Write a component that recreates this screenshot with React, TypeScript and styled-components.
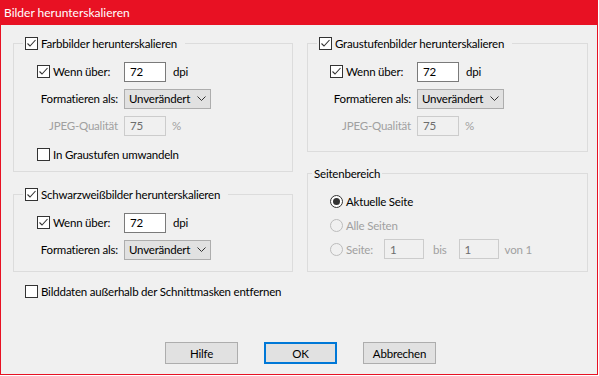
import React from 'react'
import styled, { createGlobalStyle } from 'styled-components'

/**
 * global
 */
const GlobalStyle = createGlobalStyle`
  html, body {
    margin: 0;
    padding: 0;
    background: #ffffff;
  }
  body {
    font-family: Lato, "Liberation Sans", sans-serif;
    font-size: 11.5px;
    letter-spacing: -0.2px;
    color: #000000;
  }
  * {
    box-sizing: border-box;
  }
`

/**
 * styled
 */
const Window = styled.div`
  width: 598px;
  height: 375px;
  display: flex;
  flex-direction: column;
  background: #f0f0f0;
  border: 1px solid #e81123;
  border-top: none;
`

const TitleBar = styled.div`
  height: 25px;
  flex-shrink: 0;
  display: flex;
  align-items: center;
  padding-left: 4px;
  margin: 0 -1px;
  background: #e81123;
  color: #ffffff;
  font-size: 12px;
  letter-spacing: 0;
`

const Body = styled.div`
  flex: 1;
  display: flex;
  flex-direction: column;
  padding: 11px 9px 10px 12px;
`

const Columns = styled.div`
  display: grid;
  grid-template-columns: 280px 281px;
  column-gap: 14px;
  align-items: start;
`

const Column = styled.div`
  display: flex;
  flex-direction: column;
`

const Group = styled.fieldset<{ $mt?: number }>`
  margin: ${(p) => p.$mt || 0}px 0 0 0;
  padding: 0;
  min-width: 0;
  border: 1px solid #dcdcdc;
`

const Legend = styled.legend<{ $ml: number; $pr: number }>`
  height: 15px;
  display: flex;
  align-items: center;
  margin-left: ${(p) => p.$ml}px;
  padding: 0 ${(p) => p.$pr}px 0 2px;
`

const Rows = styled.div<{ $indent: number; $pb: number; $gap: number }>`
  display: flex;
  flex-direction: column;
  gap: ${(p) => p.$gap}px;
  padding: 10px 0 ${(p) => p.$pb}px ${(p) => p.$indent}px;
`

const FieldRow = styled.div<{ $mt?: number; $h?: number }>`
  display: grid;
  grid-template-columns: 87px auto auto auto auto;
  justify-content: start;
  align-items: center;
  height: ${(p) => p.$h || 21}px;
  margin-top: ${(p) => p.$mt || 0}px;
`

const FieldLabel = styled.span<{ $disabled?: boolean }>`
  justify-self: end;
  padding-right: 6px;
  white-space: nowrap;
  color: ${(p) => (p.$disabled ? '#a0a0a0' : '#000000')};
`

const Unit = styled.span<{ $disabled?: boolean; $ml: number }>`
  margin-left: ${(p) => p.$ml}px;
  color: ${(p) => (p.$disabled ? '#a0a0a0' : '#000000')};
`

const CheckLabel = styled.label<{ $disabled?: boolean }>`
  display: flex;
  align-items: center;
  gap: 3px;
  white-space: nowrap;
  color: ${(p) => (p.$disabled ? '#a0a0a0' : '#000000')};
`

const Box = styled.span`
  width: 13px;
  height: 13px;
  flex-shrink: 0;
  display: inline-flex;
  border: 1px solid #333333;
  background: #ffffff;
`

const RadioDot = styled.span<{ $disabled?: boolean; $checked?: boolean }>`
  width: 13px;
  height: 13px;
  flex-shrink: 0;
  display: inline-flex;
  align-items: center;
  justify-content: center;
  border-radius: 50%;
  border: 1px solid ${(p) => (p.$disabled ? '#bcbcbc' : '#333333')};
  background: ${(p) => (p.$disabled ? '#f0f0f0' : '#ffffff')};
  &::after {
    content: '';
    display: ${(p) => (p.$checked ? 'block' : 'none')};
    width: 7px;
    height: 7px;
    border-radius: 50%;
    background: #333333;
  }
`

const TextBox = styled.span<{ $disabled?: boolean; $w?: number }>`
  width: ${(p) => p.$w || 42}px;
  height: 20px;
  display: flex;
  align-items: center;
  padding-left: 5px;
  border: 1px solid ${(p) => (p.$disabled ? '#cccccc' : '#7a7a7a')};
  background: ${(p) => (p.$disabled ? '#f0f0f0' : '#ffffff')};
  color: ${(p) => (p.$disabled ? '#6d6d6d' : '#000000')};
`

const Select = styled.span`
  width: 87px;
  height: 20px;
  display: flex;
  align-items: center;
  justify-content: space-between;
  padding: 0 4px 0 4px;
  border: 1px solid #adadad;
  background: #e1e1e1;
`

const PageRow = styled.div`
  display: flex;
  align-items: center;
  height: 20px;
`

const PageLead = styled.div`
  width: 54px;
  display: flex;
`

const OuterCheck = styled.div`
  height: 21px;
  display: flex;
  align-items: center;
  margin: 9px 0 0 12px;
`

const Footer = styled.div`
  margin-top: auto;
  display: flex;
  justify-content: center;
  gap: 26px;
`

const Button = styled.button<{ $default?: boolean }>`
  width: 73px;
  height: 22px;
  padding: 0;
  font: inherit;
  letter-spacing: inherit;
  color: #000000;
  background: #e1e1e1;
  border: ${(p) => (p.$default ? '2px solid #0078d7' : '1px solid #adadad')};
`

/**
 * parts
 */
const Check: React.FC<{ checked?: boolean; label: string }> = ({ checked, label }) => (
  <CheckLabel>
    <Box>
      {checked ? (
        <svg width="11" height="11" viewBox="0 0 11 11">
          <polyline points="1.5,5.5 4,8 9.5,2" fill="none" stroke="#333333" strokeWidth="1.1" />
        </svg>
      ) : null}
    </Box>
    {label}
  </CheckLabel>
)

const Radio: React.FC<{ checked?: boolean; disabled?: boolean; label: string }> = ({
  checked,
  disabled,
  label,
}) => (
  <CheckLabel $disabled={disabled}>
    <RadioDot $checked={checked} $disabled={disabled} />
    {label}
  </CheckLabel>
)

const Dropdown: React.FC<{ value: string }> = ({ value }) => (
  <Select>
    {value}
    <svg width="9" height="5" viewBox="0 0 9 5">
      <polyline points="0.5,0.5 4.5,4.5 8.5,0.5" fill="none" stroke="#333333" strokeWidth="1" />
    </svg>
  </Select>
)

const ResampleGroup: React.FC<{
  title: string
  indent: number
  mt?: number
  jpeg?: boolean
  grayscale?: boolean
  pb: number
}> = ({ title, indent, mt, jpeg, grayscale, pb }) => (
  <Group $mt={mt}>
    <Legend $ml={9} $pr={8}>
      <Check checked label={title} />
    </Legend>
    <Rows $indent={indent} $pb={pb} $gap={6}>
      <FieldRow>
        <Check checked label="Wenn über:" />
        <TextBox>72</TextBox>
        <Unit $ml={7}>dpi</Unit>
      </FieldRow>
      <FieldRow>
        <FieldLabel>Formatieren als:</FieldLabel>
        <Dropdown value="Unverändert" />
      </FieldRow>
      {jpeg ? (
        <FieldRow>
          <FieldLabel $disabled>JPEG-Qualität</FieldLabel>
          <TextBox $disabled>75</TextBox>
          <Unit $disabled $ml={6}>
            %
          </Unit>
        </FieldRow>
      ) : null}
      {grayscale ? (
        <FieldRow $mt={2}>
          <Check label="In Graustufen umwandeln" />
        </FieldRow>
      ) : null}
    </Rows>
  </Group>
)

const App: React.FC = () => {
  return (
    <>
      <GlobalStyle />
      <Window>
        <TitleBar>Bilder herunterskalieren</TitleBar>
        <Body>
          <Columns>
            <Column>
              <ResampleGroup title="Farbbilder herunterskalieren" indent={23} jpeg grayscale pb={6} />
              <ResampleGroup title="Schwarzweißbilder herunterskalieren" indent={23} mt={15} pb={11} />
            </Column>
            <Column>
              <ResampleGroup title="Graustufenbilder herunterskalieren" indent={22} jpeg pb={15} />
              <Group $mt={14}>
                <Legend $ml={4} $pr={2}>
                  Seitenbereich
                </Legend>
                <Rows $indent={22} $pb={12} $gap={4}>
                  <PageRow>
                    <Radio checked label="Aktuelle Seite" />
                  </PageRow>
                  <PageRow>
                    <Radio disabled label="Alle Seiten" />
                  </PageRow>
                  <PageRow>
                    <PageLead>
                      <Radio disabled label="Seite:" />
                    </PageLead>
                    <TextBox $disabled $w={40}>
                      1
                    </TextBox>
                    <Unit $disabled $ml={9}>
                      bis
                    </Unit>
                    <Unit $ml={12}>
                      <TextBox $disabled $w={40}>
                        1
                      </TextBox>
                    </Unit>
                    <Unit $disabled $ml={6}>
                      von 1
                    </Unit>
                  </PageRow>
                </Rows>
              </Group>
            </Column>
          </Columns>
          <OuterCheck>
            <Check label="Bilddaten außerhalb der Schnittmasken entfernen" />
          </OuterCheck>
          <Footer>
            <Button>Hilfe</Button>
            <Button $default>OK</Button>
            <Button>Abbrechen</Button>
          </Footer>
        </Body>
      </Window>
    </>
  )
}

export default App
